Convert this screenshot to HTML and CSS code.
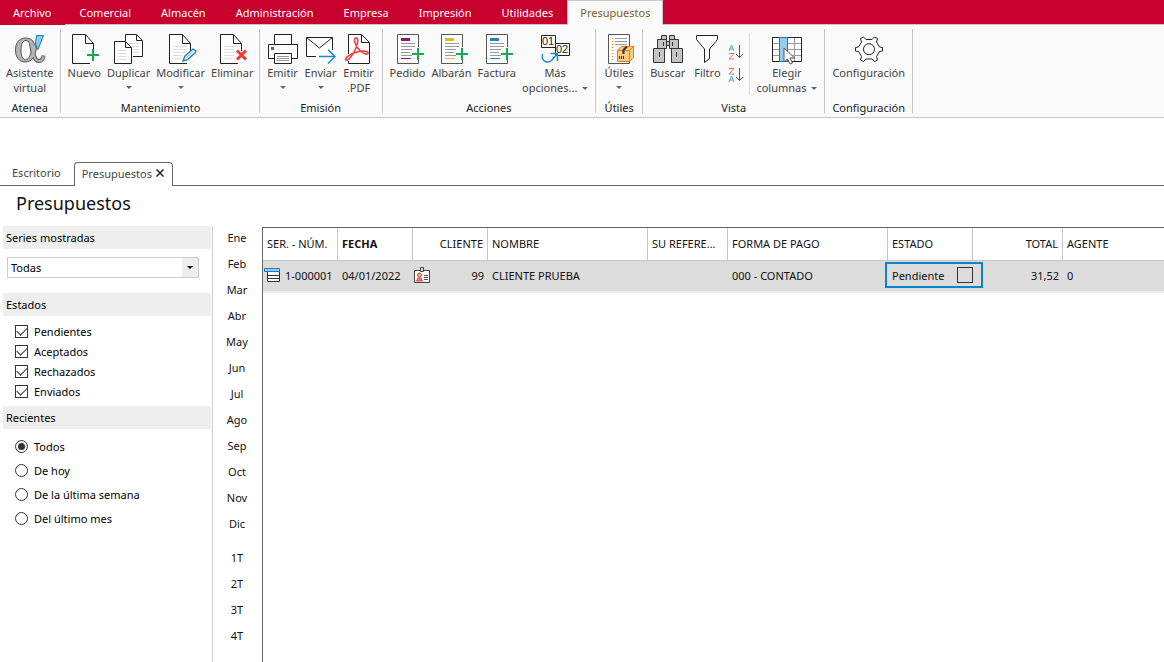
FILE: index.html
```
<!DOCTYPE html>
<html lang="es">
<head>
<meta charset="utf-8">
<title>Presupuestos</title>
<link rel="stylesheet" href="styles.css">
</head>
<body>
<svg class="defs" aria-hidden="true">
  <symbol id="page" viewBox="0 0 32 32">
    <path class="paper" d="M25.500 18V10.500L17.500 1.500H4.500V30.500H22" />
    <path class="ink" d="M17.500 2V10.500H25.500" />
  </symbol>
  <symbol id="list-page" viewBox="0 0 32 32">
    <path class="paper thin" d="M26.500 14V1.500H5.500V30.500H26.500V27" />
    <path class="rule" d="M9 10.500H23M9 13.500H23M9 16.500H20M9 19.500H18M9 22.500H20" />
    <path class="plus" d="M20 21H32M26 15V27" />
  </symbol>
</svg>

<header class="ribbon">
  <nav class="menu">
    <a href="#" class="menu-item file">Archivo</a>
    <a href="#" class="menu-item">Comercial</a>
    <a href="#" class="menu-item">Almacén</a>
    <a href="#" class="menu-item">Administración</a>
    <a href="#" class="menu-item">Empresa</a>
    <a href="#" class="menu-item">Impresión</a>
    <a href="#" class="menu-item">Utilidades</a>
    <a href="#" class="menu-item current">Presupuestos</a>
  </nav>
  <div class="groups">
    <section class="group first">
      <div class="tools">
        <button class="tool">
          <svg class="icon" viewBox="0 0 32 32">
            <path d="M16.500 8C18 15 19 28 25 28C28 28 29 26 29.500 22.500" fill="none" stroke="#555" stroke-width="4" />
            <path d="M11.500 5C5 5 1.500 10 1.500 17C1.500 24 5 29 11 29C17 29 21 25 22.500 15L20 10C18.500 6.500 15.500 5 11.500 5ZM12 7.500C15 7.500 16.500 11 17.500 18C16 24 14 26.500 11.500 26.500C8 26.500 7 22 7 17C7 11 8.500 7.500 12 7.500Z" fill="#b4b4b4" stroke="#555" fill-rule="evenodd" />
            <path d="M16.500 8C18 15 19 28 25 28C28 28 29 26 29.500 23" fill="none" stroke="#b4b4b4" stroke-width="2" />
            <path d="M22.500 2.500H29.500L24 16.500L21.500 11Z" fill="#8fc8f0" stroke="#1979c0" />
          </svg>
          <span>Asistente<br>virtual</span>
        </button>
      </div>
      <h2 class="group-name">Atenea</h2>
    </section>
    <section class="group edit">
      <div class="tools">
        <button class="tool">
          <svg class="icon" viewBox="0 0 32 32"><use href="#page" /><path class="plus" d="M19 22H31M25 16V28" /></svg>
          <span>Nuevo</span>
        </button>
        <button class="tool">
          <svg class="icon" viewBox="0 0 32 32">
            <path class="paper" d="M12.500 8V1.500H23.500L29.500 7.500V23.500H20" /><path class="ink" d="M23.500 2V7.500H29" />
            <path class="faint" d="M16 10.500H26M18 13.500H26M20 16.500H26M20 19.500H26" />
            <path class="paper" d="M1.500 8.500H12.500L18.500 14.500V30.500H1.500Z" /><path class="ink" d="M12.500 9V14.500H18" />
            <path class="faint" d="M5 17.500H14M5 20.500H14M5 23.500H14M5 26.500H14" />
          </svg>
          <span>Duplicar</span><i class="caret"></i>
        </button>
        <button class="tool">
          <svg class="icon" viewBox="0 0 32 32"><use href="#page" />
            <path class="faint" d="M8 13.500H22M8 16.500H22M8 19.500H20M8 22.500H18M8 25.500H16" />
            <path d="M18 28L20 23L28 16L31 18L30 20L22 27Z" fill="#fff" stroke="#1979c0" stroke-width="1.300" /><path d="M21 25L28 18.500" stroke="#69b4e8" />
          </svg>
          <span>Modificar</span><i class="caret"></i>
        </button>
        <button class="tool">
          <svg class="icon" viewBox="0 0 32 32"><use href="#page" />
            <path class="faint" d="M8 13.500H22M8 16.500H18M8 19.500H18M8 22.500H18M8 25.500H16" />
            <path d="M21 17.500L30 26.500M30 17.500L21 26.500" stroke="#ee3b35" stroke-width="3" />
          </svg>
          <span>Eliminar</span>
        </button>
      </div>
      <h2 class="group-name">Mantenimiento</h2>
    </section>
    <section class="group">
      <div class="tools">
        <button class="tool">
          <svg class="icon" viewBox="0 0 32 32">
            <path class="paper" d="M7.500 11.500V1.500H24.500V11.500M7 25.500H1.500V11.500H30.500V25.500H25" />
            <path class="paper" d="M7.500 20.500H24.500V30.500H7.500Z" /><path class="rule" d="M10 23.500H22M10 25.500H22M10 27.500H22" />
            <path d="M4 14H7V17H4Z" fill="#1979c0" />
          </svg>
          <span>Emitir</span><i class="caret"></i>
        </button>
        <button class="tool">
          <svg class="icon" viewBox="0 0 32 32">
            <path class="paper" d="M11 23.500H1.500V4.500H27.500V17M1.500 4.500L14.500 15L27.500 4.500" />
            <path d="M14 23.500H30M23 16.500L30 23.500L23 30.500" fill="none" stroke="#1e88d2" stroke-width="1.500" />
          </svg>
          <span>Enviar</span><i class="caret"></i>
        </button>
        <button class="tool">
          <svg class="icon" viewBox="0 0 32 32">
            <path class="paper" d="M5.500 21V1.500H18.500L26.500 9.500V30.500H5.500V28" /><path class="ink" d="M18.500 2V9.500H26" />
            <path d="M12.500 5C16 4 15 10 13 15C11 20 6 28 3 27C1 25 8 20 16 18.500C22 17.500 26 18.500 25 20.500C23 22.500 17 19 14 14C11.500 9.500 10.500 6 12.500 5Z" fill="none" stroke="#f04040" stroke-width="1.600" />
          </svg>
          <span>Emitir<br>.PDF</span>
        </button>
      </div>
      <h2 class="group-name">Emisión</h2>
    </section>
    <section class="group">
      <div class="tools">
        <button class="tool">
          <svg class="icon" viewBox="0 0 32 32"><use href="#list-page" /><path d="M9 5H18V8H9ZM9 25H19V26H9Z" fill="#921081" /></svg>
          <span>Pedido</span>
        </button>
        <button class="tool">
          <svg class="icon" viewBox="0 0 32 32"><use href="#list-page" /><path d="M9 5H18V8H9ZM9 25H19V26H9Z" fill="#f9ad2a" /></svg>
          <span>Albarán</span>
        </button>
        <button class="tool">
          <svg class="icon" viewBox="0 0 32 32"><use href="#list-page" /><path d="M9 5H18V8H9ZM9 25H19V26H9Z" fill="#1e82c4" /></svg>
          <span>Factura</span>
        </button>
        <button class="tool">
          <svg class="icon" viewBox="0 0 32 32">
            <path class="paper" d="M2.500 2.500H16.500V14.500H2.500Z" />
            <path class="paper" d="M16.500 10.500H30.500V22.500H16.500Z" />
            <text class="digits" x="3" y="12">01</text><text class="digits" x="17" y="20">02</text>
            <path d="M3.500 21C2 29 9 31 13 27L18 21M11.500 20.500H18.500V28" fill="none" stroke="#1e88d2" stroke-width="1.500" />
          </svg>
          <span>Más<br>opciones... <i class="caret inline"></i></span>
        </button>
      </div>
      <h2 class="group-name">Acciones</h2>
    </section>
    <section class="group">
      <div class="tools">
        <button class="tool">
          <svg class="icon" viewBox="0 0 32 32">
            <path class="paper thin" d="M5.500 1.500H26.500V30.500H5.500Z" /><path class="rule" d="M12 5.500H24M12 8.500H24M12 11.500H24" />
            <path d="M9.500 5V29" stroke="#f07d1e" stroke-dasharray="1 2" />
            <path d="M14.500 17.500L18.500 13.500H30.500V24.500L26.500 28.500H14.500Z" fill="#fdcb80" stroke="#ef7d17" /><path d="M14.500 17.500H26.500V28M26.500 17.500L30.500 13.500" fill="none" stroke="#ef7d17" />
            <path d="M24 13.500L20.500 17V21" fill="none" stroke="#333" stroke-width="2" /><path d="M16.500 23V26M18.500 23V26M20.500 23V26" stroke="#333" />
          </svg>
          <span>Útiles</span><i class="caret"></i>
        </button>
      </div>
      <h2 class="group-name">Útiles</h2>
    </section>
    <section class="group">
      <div class="tools">
        <button class="tool">
          <svg class="icon" viewBox="0 0 32 32">
            <g fill="#c4c4c4" stroke="#333"><path d="M9.500 2.500H14.500V6.500H9.500ZM17.500 2.500H22.500V6.500H17.500ZM5.500 6.500H14.500V15.500H5.500ZM17.500 6.500H26.500V15.500H17.500ZM1.500 15.500H12.500V29.500H1.500ZM19.500 15.500H30.500V29.500H19.500ZM14.500 8.500H17.500V12.500H14.500Z" /></g>
            <path d="M11.500 9V13M20.500 9V13M7.500 19V24M24.500 19V24" stroke="#333" />
          </svg>
          <span>Buscar</span>
        </button>
        <button class="tool">
          <svg class="icon" viewBox="0 0 32 32"><path class="paper" d="M5.500 2.500H26.500V6.500L18.500 16V25.500L13.500 29.500V16L5.500 6.500Z" /></svg>
          <span>Filtro</span>
        </button>
        <div class="sorts">
          <button class="sort" aria-label="Orden ascendente">
            <svg class="sort-icon" viewBox="0 0 16 16"><path d="M1 7L3.500 1L6 7M2 5H5" class="letter-a" /><path d="M1 9.500H6L1 15H6" class="letter-z" /><path d="M11.500 1V13.500M8 10L11.500 13.500L15 10" class="ink soft" /></svg>
          </button>
          <button class="sort" aria-label="Orden descendente">
            <svg class="sort-icon" viewBox="0 0 16 16"><path d="M1 1.500H6L1 7H6" class="letter-z" /><path d="M1 15L3.500 9L6 15M2 13H5" class="letter-a" /><path d="M11.500 1V13.500M8 10L11.500 13.500L15 10" class="ink soft" /></svg>
          </button>
        </div>
        <button class="tool">
          <svg class="icon" viewBox="0 0 32 32">
            <path d="M1.500 4.500H30.500V28.500H1.500Z" fill="#fff" />
            <path class="rule" d="M1 10.500H31M1 16.500H31M1 22.500H31M23.500 5V28" /><path class="ink" d="M1.500 4.500H30.500V28.500H1.500Z" />
            <path d="M8.500 4.500H16.500V28.500H8.500Z" fill="#94cbf0" stroke="#1979c0" />
            <path d="M13 15V29L16.500 26L19 31L21.500 30L19 25H23.500Z" fill="#fff" stroke="#555" />
          </svg>
          <span>Elegir<br>columnas <i class="caret inline"></i></span>
        </button>
      </div>
      <h2 class="group-name">Vista</h2>
    </section>
    <section class="group">
      <div class="tools">
        <button class="tool">
          <svg class="icon" viewBox="0 0 32 32">
            <path class="paper" d="M10.500 4L13 6.500H19L21.500 4L24.500 5.500L23.500 9L26.500 14L29.500 14.500V18L26.500 18.500L23.500 23.500L24.500 27L21.500 28.500L19 26H13L10.500 28.500L7.500 27L8.500 23.500L5.500 18.500L2.500 18V14.500L5.500 14L8.500 9L7.500 5.500Z" />
            <circle class="paper" cx="16" cy="16.200" r="5.500" />
          </svg>
          <span>Configuración</span>
        </button>
      </div>
      <h2 class="group-name">Configuración</h2>
    </section>
  </div>
</header>

<nav class="tabs">
  <a href="#" class="tab">Escritorio</a>
  <div class="tab active"><a href="#">Presupuestos</a>
    <button class="close" aria-label="Cerrar"><svg class="close-icon" viewBox="0 0 8 8"><path d="M0.500 0.500L7.500 7.500M7.500 0.500L0.500 7.500" stroke="#222" stroke-width="1.500" /></svg></button>
  </div>
</nav>

<h1 class="title">Presupuestos</h1>

<main class="workspace">
  <aside class="filters">
    <h2 class="bar"><label for="series">Series mostradas</label></h2>
    <div class="combo">
      <select id="series"><option>Todas</option></select>
      <span class="combo-arrow"></span>
    </div>
    <h2 class="bar">Estados</h2>
    <div class="checks">
      <label><input type="checkbox" checked>Pendientes</label>
      <label><input type="checkbox" checked>Aceptados</label>
      <label><input type="checkbox" checked>Rechazados</label>
      <label><input type="checkbox" checked>Enviados</label>
    </div>
    <h2 class="bar">Recientes</h2>
    <div class="radios">
      <label><input type="radio" name="recientes" checked>Todos</label>
      <label><input type="radio" name="recientes">De hoy</label>
      <label><input type="radio" name="recientes">De la última semana</label>
      <label><input type="radio" name="recientes">Del último mes</label>
    </div>
  </aside>
  <nav class="periods">
    <a href="#">Ene</a><a href="#">Feb</a><a href="#">Mar</a><a href="#">Abr</a><a href="#">May</a><a href="#">Jun</a>
    <a href="#">Jul</a><a href="#">Ago</a><a href="#">Sep</a><a href="#">Oct</a><a href="#">Nov</a><a href="#">Dic</a>
    <a href="#" class="quarter">1T</a><a href="#">2T</a><a href="#">3T</a><a href="#">4T</a>
  </nav>
  <div class="grid">
    <table>
      <colgroup>
        <col class="w75"><col class="w75"><col class="w75"><col class="w160"><col class="w80"><col class="w160"><col class="w85"><col class="w90"><col>
      </colgroup>
      <thead>
        <tr><th>SER. - NÚM.</th><th class="sorted">FECHA</th><th class="num">CLIENTE</th><th>NOMBRE</th><th>SU REFERE...</th><th>FORMA DE PAGO</th><th>ESTADO</th><th class="num">TOTAL</th><th>AGENTE</th></tr>
      </thead>
      <tbody>
        <tr>
          <td class="tight"><div class="with-icon">
            <svg class="cell-icon" viewBox="0 0 16 16"><path d="M3.500 4.500H15.500V14.500H3.500Z" fill="#fff" stroke="#333" /><path d="M4 8.500H15M4 11.500H15" stroke="#333" /><path d="M0.500 1.500H15.500V4.500H0.500Z" fill="#94cbf0" stroke="#1979c0" /></svg>
            <span>1-000001</span></div></td>
          <td>04/01/2022</td>
          <td class="tight"><div class="with-icon spread">
            <svg class="cell-icon" viewBox="0 0 16 16"><path d="M0.500 3.500H15.500V15.500H0.500Z" fill="#fff" stroke="#444" /><path d="M6.500 0.500H9.500V4.500H6.500Z" fill="#ddd" stroke="#444" /><path d="M10 8.500H14M10 10.500H14M10 12.500H14" stroke="#555" /><circle cx="5.500" cy="8" r="2" fill="#f4b183" stroke="#b5523a" /><path d="M2.500 14L4 11H7L8.500 14Z" fill="#f47c70" stroke="#d9443c" /></svg>
            <span>99</span></div></td>
          <td>CLIENTE PRUEBA</td><td></td><td>000 - CONTADO</td>
          <td class="state"><div class="editor"><span>Pendiente</span><button class="pick" aria-label="Cambiar estado"></button></div></td>
          <td class="num">31,52</td><td>0</td>
        </tr>
      </tbody>
    </table>
  </div>
</main>
</body>
</html>
```
FILE: styles.css
```
* { box-sizing: border-box; }
body { margin: 0; min-height: 100vh; display: flex; flex-direction: column; background: #fff; color: #111; font: 11px/15px "Noto Sans", sans-serif; }
a { color: inherit; text-decoration: none; }
button { margin: 0; padding: 0; border: 0; background: none; color: inherit; font: inherit; }
h1, h2 { margin: 0; font-weight: 400; }
.defs { display: none; }

.menu { display: flex; height: 25px; background: #c8002d; border-bottom: 1px solid #c8c8c8; color: #fff; }
.menu-item { height: 24px; padding: 5px 15px; line-height: 15px; }
.menu-item.file { height: 25px; padding: 5px 13px; background: #c8002d; }
.menu-item.current { height: 25px; margin-left: -1px; padding: 4px 12px; border: 1px solid #c8c8c8; border-bottom: 0; background: #fafafa; color: #80601c; }

.groups { display: flex; height: 93px; background: #fafafa; border-bottom: 1px solid #c6c6c6; }
.group { display: flex; flex-direction: column; justify-content: space-between; margin: 4px 0; padding: 4px 4px 0; border-right: 1px solid #c6c6c6; }
.group.first { padding-left: 3px; padding-right: 3px; }
.group.edit { padding-right: 2px; }
.tools { display: flex; }
.tool { display: flex; flex-direction: column; align-items: center; min-width: 38px; padding: 0 3px; color: #444; text-align: center; line-height: 15px; white-space: nowrap; }
.icon { width: 32px; height: 32px; }
.group-name { font-size: 11px; line-height: 10px; text-align: center; color: #222; }
.caret { border: 3px solid transparent; border-top-color: #666; border-bottom: 0; margin-top: 6px; }
.caret.inline { display: inline-block; margin: 0 0 2px 2px; }
.sorts { display: flex; flex-direction: column; gap: 7px; margin-right: 3px; padding: 11px 5px 0 2px; border-right: 1px solid #ddd; }
.sort { height: 16px; }
.sort-icon { display: block; width: 16px; height: 16px; }
.paper { fill: #fff; stroke: #222; }
.thin { stroke: #555; }
.ink { fill: none; stroke: #222; }
.soft { stroke: #555; }
.rule { fill: none; stroke: #999; }
.faint { fill: none; stroke: #ddd; }
.plus { fill: none; stroke: #12a84e; stroke-width: 2; }
.letter-a { fill: none; stroke: #4da3dd; }
.letter-z { fill: none; stroke: #ee6b6b; }
.digits { font: 11px "Liberation Sans", sans-serif; fill: #222; }

.tabs { display: flex; margin-top: 44px; height: 24px; padding-left: 12px; border-bottom: 1px solid #666; color: #444; }
.tab { padding-top: 3px; }
.tab.active { display: flex; align-items: center; gap: 4px; height: 24px; margin-left: 13px; padding: 0 8px 3px 7px; border: 1px solid #666; border-bottom: 0; border-radius: 4px 4px 0 0; background: #fff; }
.close-icon { display: block; width: 8px; height: 8px; }
.title { padding: 4px 16px 0; height: 40px; font-size: 18px; line-height: 27px; }

.workspace { display: flex; flex: 1; }
.filters { width: 213px; flex: none; padding: 0 1px 0 3px; border-right: 1px solid #ccc; color: #000; }
.bar { padding: 4px 3px; background: #eee; font-size: 11px; line-height: 15px; }
.combo { position: relative; margin: 8px 12px 15px 4px; }
.combo select { display: block; width: 100%; height: 21px; padding: 0 3px; appearance: none; border: 1px solid #ccc; border-radius: 0; background: #fff; color: #000; font: inherit; }
.combo-arrow { position: absolute; top: 1px; right: 1px; bottom: 1px; width: 16px; display: grid; place-items: center; background: #eee; pointer-events: none; }
.combo-arrow::after { content: ""; border: 3px solid transparent; border-top-color: #000; border-bottom: 0; }
.checks { padding: 5px 12px; }
.radios { padding: 5px 12px; }
.checks label, .radios label { display: flex; align-items: center; gap: 6px; height: 20px; }
.radios label { height: 24px; }
.checks input, .radios input { display: grid; place-items: center; appearance: none; margin: 0; width: 13px; height: 13px; border: 1px solid #333; background: #fff; }
.radios input { border-radius: 50%; }
.checks input:checked::after { content: ""; width: 9px; height: 5px; margin-bottom: 3px; border: solid #333; border-width: 0 0 1px 1px; transform: rotate(-45deg); }
.radios input:checked::after { content: ""; width: 7px; height: 7px; border-radius: 50%; background: #333; }

.periods { display: flex; flex-direction: column; width: 49px; flex: none; padding-right: 1px; text-align: center; }
.periods a { height: 26px; padding-top: 4px; }
.periods .quarter { margin-top: 8px; }

.grid { flex: 1; min-width: 0; margin-top: 1px; border: solid #666; border-width: 1px 0 0 1px; overflow: hidden; }
table { width: 100%; table-layout: fixed; border-collapse: separate; border-spacing: 0; color: #111; }
.w75 { width: 75px; }
.w80 { width: 80px; }
.w85 { width: 85px; }
.w90 { width: 90px; }
.w160 { width: 160px; }
th, td { padding: 0 4px 2px; text-align: left; font-weight: 400; white-space: nowrap; }
th { height: 33px; border: solid #c6c6c6; border-width: 0 1px 1px 0; }
th:last-child { border-right: 0; }
.sorted { font-weight: 700; }
td { height: 32px; background: #dcdcdc; border-bottom: 2px solid #eee; }
.num { text-align: right; }
.tight { padding: 0 4px 2px 1px; }
.with-icon { display: flex; align-items: center; gap: 5px; }
.spread { justify-content: space-between; }
.cell-icon { width: 16px; height: 16px; }
.state { position: relative; }
.editor { position: absolute; z-index: 1; top: 1px; left: -3px; display: flex; align-items: center; justify-content: space-between; width: 98px; height: 26px; padding: 0 8px 0 5px; border: 2px solid #0a84c8; }
.pick { width: 16px; height: 16px; border: 1px solid #333; }
```
